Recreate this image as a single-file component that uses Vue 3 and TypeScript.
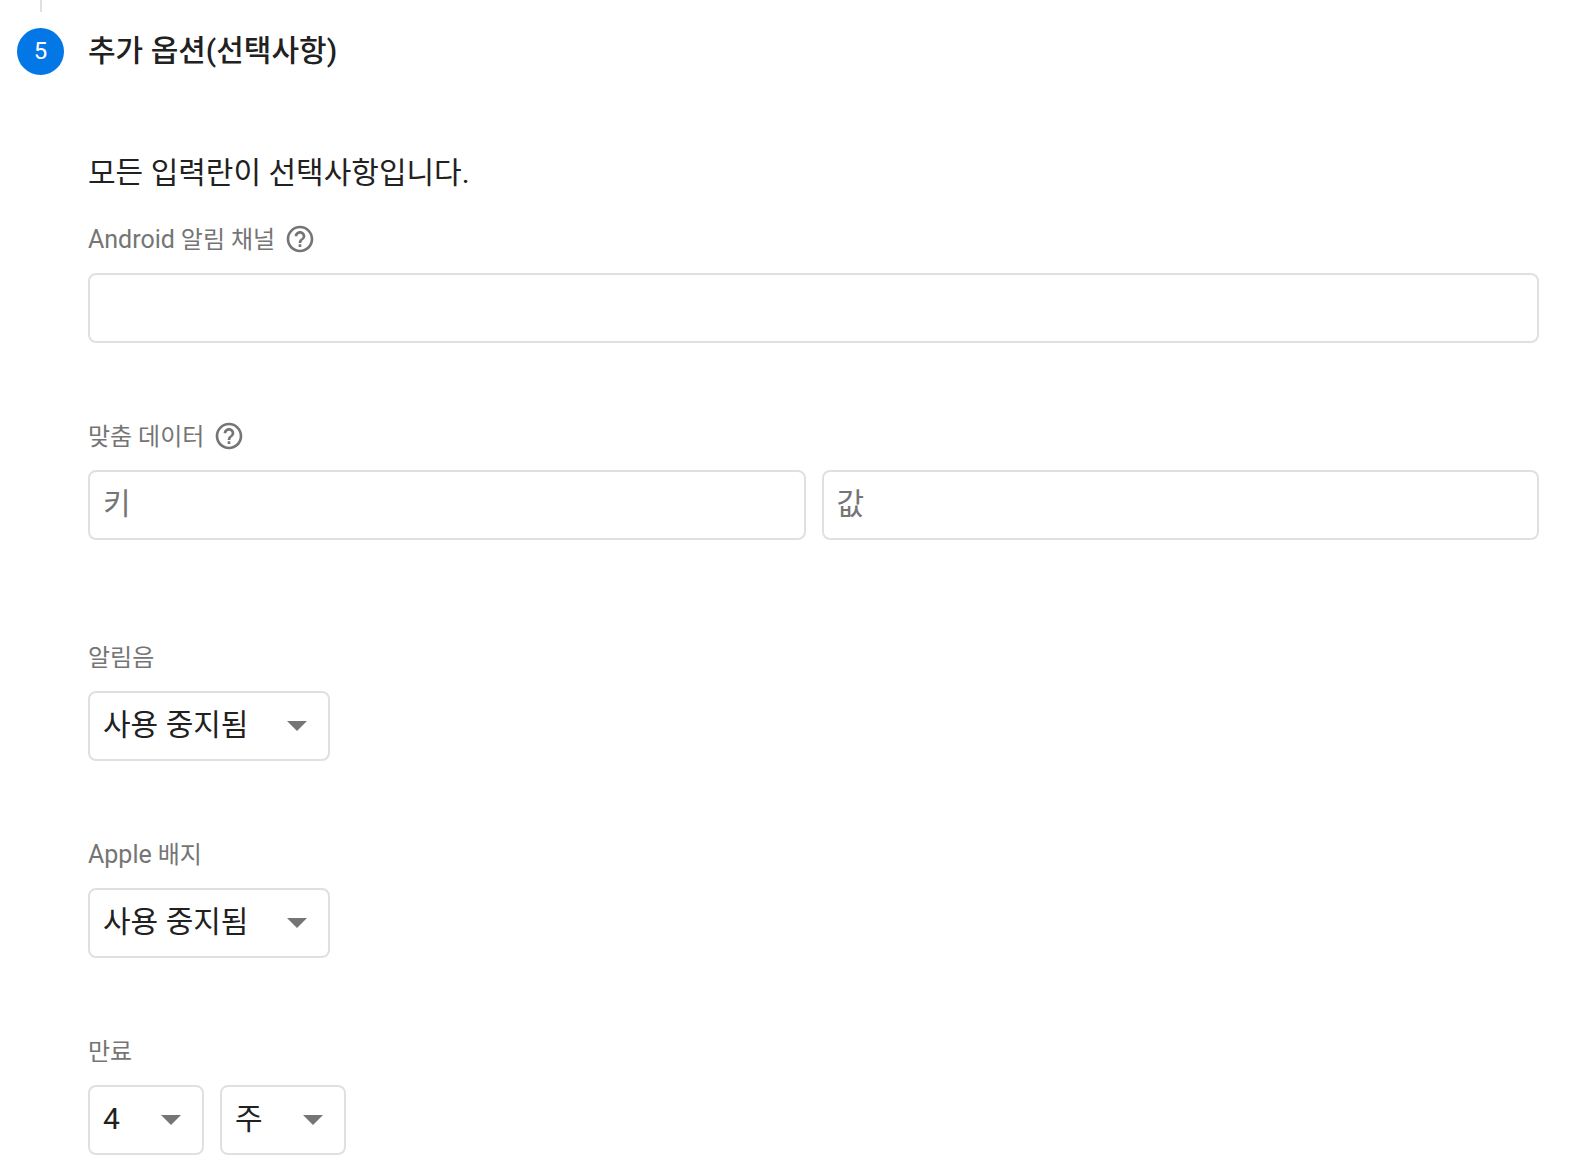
<script setup lang="ts">
import { ref } from 'vue'

const channel = ref('')
const dataKey = ref('')
const dataValue = ref('')
const sound = ref('off')
const badge = ref('off')
const amount = ref(4)
const unit = ref('week')

const toggles = [
  { value: 'off', text: '사용 중지됨' },
  { value: 'on', text: '사용 설정됨' },
]
const amounts = [1, 2, 3, 4]
const units = [
  { value: 'week', text: '주' },
  { value: 'day', text: '일' },
]
const helpIcon =
  'M11 18h2v-2h-2v2zm1-16C6.48 2 2 6.48 2 12s4.48 10 10 10 10-4.48 10-10S17.52 2 12 2zm0 18c-4.41 0-8-3.59-8-8s3.59-8 8-8 8 3.59 8 8-3.59 8-8 8zm0-14c-2.21 0-4 1.79-4 4h2c0-1.1.9-2 2-2s2 .9 2 2c0 2-3 1.75-3 5h2c0-2.25 3-2.5 3-5 0-2.21-1.79-4-4-4z'
</script>

<template>
  <section class="step">
    <div class="rail">
      <span class="line"></span>
      <span class="number">5</span>
    </div>
    <form class="body" @submit.prevent>
      <h2 class="title">추가 옵션(선택사항)</h2>
      <p class="intro">모든 입력란이 선택사항입니다.</p>

      <div class="field">
        <div class="caption">
          <label for="channel"><span class="latin">Android</span> 알림 채널</label>
          <button type="button" class="help" aria-label="Android 알림 채널">
            <svg viewBox="0 0 24 24" aria-hidden="true"><path :d="helpIcon" /></svg>
          </button>
        </div>
        <input id="channel" v-model="channel" type="text" class="box" />
      </div>

      <div class="field data">
        <div class="caption">
          <label for="data-key">맞춤 데이터</label>
          <button type="button" class="help" aria-label="맞춤 데이터">
            <svg viewBox="0 0 24 24" aria-hidden="true"><path :d="helpIcon" /></svg>
          </button>
        </div>
        <div class="row">
          <input id="data-key" v-model="dataKey" type="text" class="box" placeholder="키" />
          <input v-model="dataValue" type="text" class="box" placeholder="값" aria-label="값" />
        </div>
      </div>

      <div class="field">
        <div class="caption"><label for="sound">알림음</label></div>
        <div class="row">
          <span class="picker">
            <select id="sound" v-model="sound" class="box toggle">
              <option v-for="t in toggles" :key="t.value" :value="t.value">{{ t.text }}</option>
            </select>
            <svg class="arrow" viewBox="0 0 20 10" aria-hidden="true"><path d="M0 0h20L10 10z" /></svg>
          </span>
        </div>
      </div>

      <div class="field">
        <div class="caption">
          <label for="badge"><span class="latin">Apple</span> 배지</label>
        </div>
        <div class="row">
          <span class="picker">
            <select id="badge" v-model="badge" class="box toggle">
              <option v-for="t in toggles" :key="t.value" :value="t.value">{{ t.text }}</option>
            </select>
            <svg class="arrow" viewBox="0 0 20 10" aria-hidden="true"><path d="M0 0h20L10 10z" /></svg>
          </span>
        </div>
      </div>

      <div class="field">
        <div class="caption"><label for="amount">만료</label></div>
        <div class="row">
          <span class="picker">
            <select id="amount" v-model="amount" class="box amount">
              <option v-for="n in amounts" :key="n" :value="n">{{ n }}</option>
            </select>
            <svg class="arrow" viewBox="0 0 20 10" aria-hidden="true"><path d="M0 0h20L10 10z" /></svg>
          </span>
          <span class="picker">
            <select v-model="unit" class="box unit" aria-label="만료 단위">
              <option v-for="u in units" :key="u.value" :value="u.value">{{ u.text }}</option>
            </select>
            <svg class="arrow" viewBox="0 0 20 10" aria-hidden="true"><path d="M0 0h20L10 10z" /></svg>
          </span>
        </div>
      </div>
    </form>
  </section>
</template>

<style>
body {
  background: #fff;
}
</style>

<style scoped>
.step {
  display: flex;
  padding: 0 33px 18px 17px;
  font-family: Roboto, 'Noto Sans CJK KR', sans-serif;
  color: #212121;
}
.rail {
  display: flex;
  flex-direction: column;
  align-items: center;
  width: 47px;
  margin-right: 24px;
}
.line {
  width: 2px;
  height: 12px;
  background: #e0e0e0;
}
.number {
  width: 47px;
  height: 47px;
  margin-top: 16px;
  border-radius: 50%;
  background: #0277e5;
  color: #fff;
  font-size: 24px;
  line-height: 47px;
  text-align: center;
}
.body {
  flex: 1;
  min-width: 0;
}
.title {
  margin: 31px 0 0;
  font-size: 30px;
  font-weight: 500;
  line-height: 40px;
}
.intro {
  margin: 82px 0 30px;
  font-size: 30px;
  line-height: 40px;
}
.field {
  margin-bottom: 77px;
}
.field:last-child {
  margin-bottom: 0;
}
.data {
  margin-bottom: 101px;
}
.caption {
  display: flex;
  align-items: center;
  gap: 9px;
  height: 32px;
  margin-bottom: 18px;
  font-size: 24px;
  line-height: 32px;
  color: #757575;
}
.caption label {
  padding-top: 2px;
}
.latin {
  font-size: 25px;
}
.help {
  display: block;
  width: 32px;
  height: 32px;
  padding: 0;
  border: 0;
  background: none;
}
.help svg {
  display: block;
  width: 32px;
  height: 32px;
  fill: #757575;
}
.row {
  display: flex;
  gap: 16px;
}
.box {
  box-sizing: border-box;
  display: block;
  width: 100%;
  min-width: 0;
  height: 70px;
  margin: 0;
  padding: 0 13px 3px;
  border: 2px solid #e0e0e0;
  border-radius: 8px;
  background: #fff;
  color: #212121;
  font-family: inherit;
  font-size: 30px;
  appearance: none;
}
.box::placeholder {
  color: #757575;
  opacity: 1;
}
.picker {
  position: relative;
}
.toggle {
  width: 242px;
}
.amount {
  width: 116px;
}
.unit {
  width: 126px;
}
.arrow {
  position: absolute;
  top: 30px;
  right: 23px;
  width: 20px;
  height: 10px;
  fill: #757575;
  pointer-events: none;
}
</style>
